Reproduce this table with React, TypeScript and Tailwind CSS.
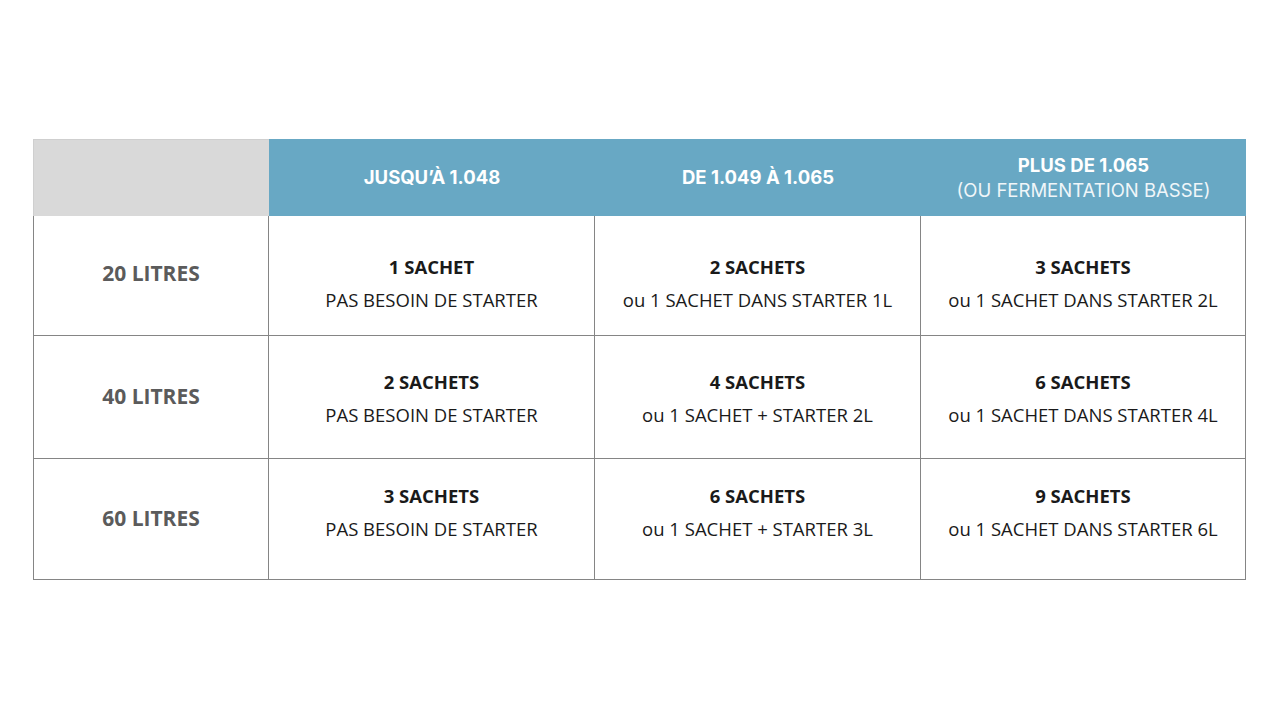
import React from "react";

const rows = [
  {
    label: "20 LITRES",
    cells: [
      ["1 SACHET", "PAS BESOIN DE STARTER"],
      ["2 SACHETS", "ou 1 SACHET DANS STARTER 1L"],
      ["3 SACHETS", "ou 1 SACHET DANS STARTER 2L"],
    ],
    h: "h-[120px]",
    lp: "pb-[4px]",
    cp: "pt-[15px]",
  },
  {
    label: "40 LITRES",
    cells: [
      ["2 SACHETS", "PAS BESOIN DE STARTER"],
      ["4 SACHETS", "ou 1 SACHET + STARTER 2L"],
      ["6 SACHETS", "ou 1 SACHET DANS STARTER 4L"],
    ],
    h: "h-[123px]",
    lp: "",
    cp: "pt-[1px]",
  },
  {
    label: "60 LITRES",
    cells: [
      ["3 SACHETS", "PAS BESOIN DE STARTER"],
      ["6 SACHETS", "ou 1 SACHET + STARTER 3L"],
      ["9 SACHETS", "ou 1 SACHET DANS STARTER 6L"],
    ],
    h: "h-[121px]",
    lp: "",
    cp: "pb-[14px]",
  },
];

export default function App() {
  return (
    <div className="w-[1280px] h-[720px] bg-white pt-[139px] pl-[33px]" style={{ fontFamily: "'Open Sans', sans-serif" }}>
      <div className="w-[1213px]">
        <div className="grid grid-cols-[236px_326px_326px_325px] h-[77px]">
          <div className="bg-[#d9d9d9] border-t border-l border-[#cfcfcf]" />
          <div className="bg-[#68a8c4] flex items-center justify-center text-white font-bold text-[18.5px]" style={{ fontFamily: "Inter, sans-serif" }}>
            JUSQU’À 1.048
          </div>
          <div className="bg-[#68a8c4] flex items-center justify-center text-white font-bold text-[18.5px]" style={{ fontFamily: "Inter, sans-serif" }}>
            DE 1.049 À 1.065
          </div>
          <div className="bg-[#68a8c4] flex flex-col items-center justify-center text-white text-[18.5px] leading-[25px]" style={{ fontFamily: "Inter, sans-serif" }}>
            <span className="font-bold">PLUS DE 1.065</span>
            <span className="font-normal text-[#f0f6f9]">(OU FERMENTATION BASSE)</span>
          </div>
        </div>
        {rows.map((r) => (
          <div key={r.label} className={`grid grid-cols-[236px_326px_326px_325px] ${r.h}`}>
            <div className={`border-l-[1.5px] border-r-[1.5px] border-b-[1.5px] border-[#858585] flex items-center justify-center text-[21px] font-bold text-[#5b5b5b] ${r.lp}`}>
              {r.label}
            </div>
            {r.cells.map((c, i) => (
              <div key={i} className={`border-r-[1.5px] border-b-[1.5px] border-[#858585] flex flex-col items-center justify-center text-[18.5px] text-[#1a1a1a] leading-[33px] ${r.cp}`}>
                <span className="font-bold">{c[0]}</span>
                <span>{c[1]}</span>
              </div>
            ))}
          </div>
        ))}
      </div>
    </div>
  );
}
